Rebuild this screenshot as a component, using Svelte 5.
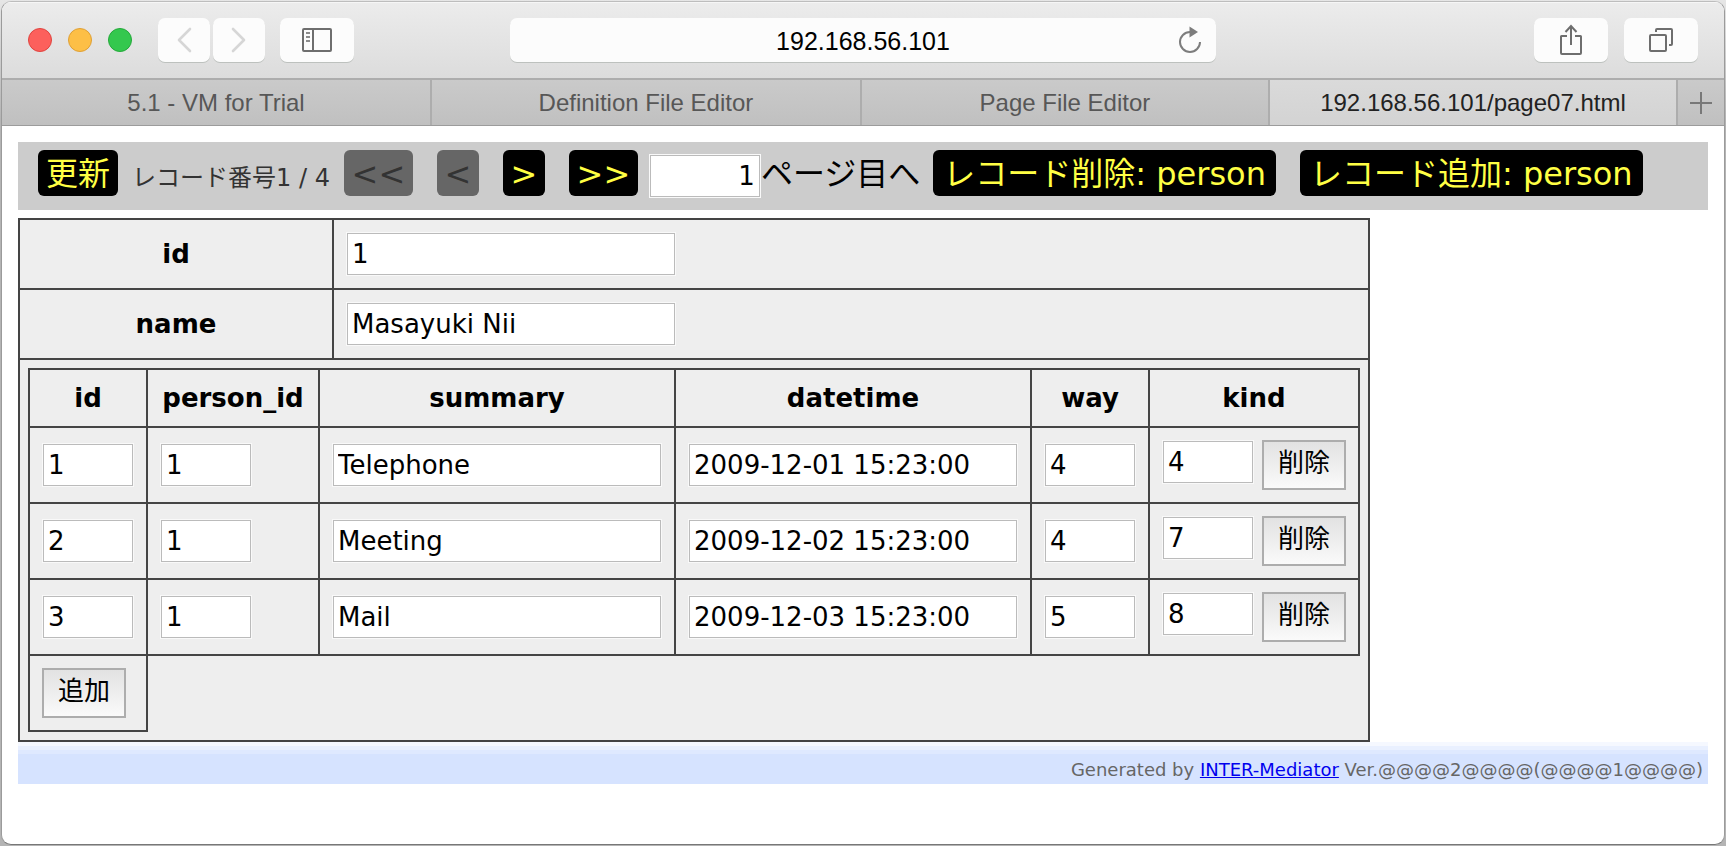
<script>
  const tabs = [
    { title: '5.1 - VM for Trial', weight: 430, active: false },
    { title: 'Definition File Editor', weight: 430, active: false },
    { title: 'Page File Editor', weight: 408, active: false },
    { title: '192.168.56.101/page07.html', weight: 408, active: true },
  ];
  let person = $state({ id: '1', name: 'Masayuki Nii' });
  let page = $state('1');
  const columns = [
    { key: 'id', size: 'short' },
    { key: 'person_id', size: 'short' },
    { key: 'summary', size: 'long' },
    { key: 'datetime', size: 'long' },
    { key: 'way', size: 'short' },
  ];
  let contacts = $state([
    { id: '1', person_id: '1', summary: 'Telephone', datetime: '2009-12-01 15:23:00', way: '4', kind: '4' },
    { id: '2', person_id: '1', summary: 'Meeting', datetime: '2009-12-02 15:23:00', way: '4', kind: '7' },
    { id: '3', person_id: '1', summary: 'Mail', datetime: '2009-12-03 15:23:00', way: '5', kind: '8' },
  ]);
</script>

<div class="window">
  <header class="toolbar">
    <div class="lights">
      <button class="light red" aria-label="Close"></button>
      <button class="light amber" aria-label="Minimize"></button>
      <button class="light green" aria-label="Zoom"></button>
    </div>
    <div class="history">
      <button class="tool" aria-label="Back">
        <svg width="16" height="28" viewBox="0 0 16 28"><path d="M14 3 3 14l11 11" fill="none" stroke="#d6d6d6" stroke-width="2.6" stroke-linecap="round" stroke-linejoin="round" /></svg>
      </button>
      <button class="tool" aria-label="Forward">
        <svg width="16" height="28" viewBox="0 0 16 28"><path d="M2 3l11 11L2 25" fill="none" stroke="#d6d6d6" stroke-width="2.6" stroke-linecap="round" stroke-linejoin="round" /></svg>
      </button>
    </div>
    <button class="tool wide" aria-label="Sidebar">
      <svg width="30" height="24" viewBox="0 0 30 24" fill="none" stroke="#6e6e6e" stroke-width="2">
        <rect x="1" y="1" width="28" height="22" rx="1" />
        <path d="M11 1v22" />
        <path d="M4 5h4M4 9h4M4 13h4" stroke="#8c8c8c" />
      </svg>
    </button>
    <div class="gap-left"></div>
    <div class="address">
      <input aria-label="Address" value="192.168.56.101" />
      <button class="reload" aria-label="Reload">
        <svg width="24" height="28" viewBox="0 0 24 28">
          <path d="M12 6a10 10 0 1 0 10 10" fill="none" stroke="#7d7d7d" stroke-width="2" />
          <path d="M11.500 0.500 20 6l-8.500 5.500z" fill="#7d7d7d" />
        </svg>
      </button>
    </div>
    <div class="gap-right"></div>
    <div class="actions">
      <button class="tool wide" aria-label="Share">
        <svg width="24" height="32" viewBox="0 0 24 32" fill="none" stroke="#6e6e6e" stroke-width="2">
          <path d="M8 12H2.500A.5.5 0 0 0 2 12.500V29a1 1 0 0 0 1 1h18a1 1 0 0 0 1-1V12.500a.5.5 0 0 0-.5-.5H16M12 21V2M6.500 8 12 2l5.500 6" />
        </svg>
      </button>
      <button class="tool wide" aria-label="Show all tabs">
        <svg width="26" height="26" viewBox="0 0 26 26" fill="none" stroke="#6e6e6e" stroke-width="2">
          <rect x="2" y="8" width="16" height="16" rx="1" />
          <path d="M8 5V3a1 1 0 0 1 1-1h14a1 1 0 0 1 1 1v14a1 1 0 0 1-1 1h-2" />
        </svg>
      </button>
    </div>
  </header>

  <nav class="tabs" aria-label="Tabs">
    {#each tabs as tab}
      <button class="tab" class:active={tab.active} style="flex-grow: {tab.weight}">{tab.title}</button>
    {/each}
    <button class="new-tab" aria-label="New tab">
      <svg width="22" height="22" viewBox="0 0 22 22"><path d="M0 11h22M11 0v22" stroke="#787878" stroke-width="2" /></svg>
    </button>
  </nav>

  <main class="page">
    <div class="navigator">
      <button class="nav-btn">更新</button>
      <span class="info">レコード番号1 / 4</span>
      <div class="group">
        <button class="nav-btn double" disabled>&lt;&lt;</button>
        <button class="nav-btn single" disabled>&lt;</button>
        <button class="nav-btn single">&gt;</button>
        <button class="nav-btn double">&gt;&gt;</button>
      </div>
      <label class="jump"><input class="field" bind:value={page} />ページ目へ</label>
      <div class="group">
        <button class="nav-btn command">レコード削除: person</button>
        <button class="nav-btn command">レコード追加: person</button>
      </div>
    </div>

    <table class="record">
      <tbody>
        <tr>
          <th class="name-cell" scope="row"><label for="person-id">id</label></th>
          <td><input id="person-id" class="field long" bind:value={person.id} /></td>
        </tr>
        <tr>
          <th class="name-cell" scope="row"><label for="person-name">name</label></th>
          <td><input id="person-name" class="field long" bind:value={person.name} /></td>
        </tr>
        <tr>
          <td class="nest" colspan="2">
            <table>
              <thead>
                <tr>
                  {#each columns as column}
                    <th class:key-cell={column.key === 'person_id'} scope="col">{column.key}</th>
                  {/each}
                  <th scope="col">kind</th>
                </tr>
              </thead>
              <tbody>
                {#each contacts as contact}
                  <tr>
                    {#each columns as column}
                      <td><input class="field {column.size}" aria-label={column.key} bind:value={contact[column.key]} /></td>
                    {/each}
                    <td>
                      <div class="kind">
                        <input class="field short" aria-label="kind" bind:value={contact.kind} />
                        <button class="row-btn">削除</button>
                      </div>
                    </td>
                  </tr>
                {/each}
                <tr>
                  <td><button class="row-btn">追加</button></td>
                </tr>
              </tbody>
            </table>
          </td>
        </tr>
      </tbody>
    </table>

    <footer class="credit">
      Generated by <a href="#top">INTER-Mediator</a> Ver.@@@@2@@@@(@@@@1@@@@)
    </footer>
  </main>
</div>

<style>
  :global(body) {
    padding: 1px;
    background: linear-gradient(#e6e6e6, #b4b4b4 120px, #b4b4b4);
  }
  .window, .window * {
    box-sizing: border-box;
  }
  .window {
    display: flex;
    flex-direction: column;
    min-height: calc(100vh - 2px);
    border: 1px solid #9b9b9b;
    border-top-color: #bdbdbd;
    border-bottom-color: #777;
    border-radius: 10px;
    overflow: hidden;
    background: #fff;
    color: #000;
    font-family: "DejaVu Sans", "Noto Sans CJK JP", sans-serif;
    font-size: 26px;
  }
  button {
    margin: 0;
    padding: 0;
    border: 0;
    font: inherit;
    color: inherit;
  }
  svg {
    display: block;
  }

  .toolbar {
    display: flex;
    align-items: center;
    height: 76px;
    padding: 0 26px;
    background: linear-gradient(#ececec, #dcdcdc);
    box-shadow: inset 0 1px #f6f6f6;
  }
  .lights {
    display: flex;
    gap: 16px;
  }
  .light {
    width: 24px;
    height: 24px;
    border: 1px solid;
    border-radius: 50%;
  }
  .red { background: #fc605c; border-color: #e0443f; }
  .amber { background: #fdbf46; border-color: #dfa036; }
  .green { background: #34c84e; border-color: #24a93a; }
  .history {
    display: flex;
    gap: 3px;
    margin: 0 15px 0 26px;
  }
  .tool {
    display: flex;
    align-items: center;
    justify-content: center;
    width: 52px;
    height: 44px;
    border-radius: 7px;
    background: #fcfcfc;
    box-shadow: 0 1px #bdc1be;
  }
  .wide {
    width: 74px;
  }
  .gap-left {
    flex: 156 1 0;
  }
  .gap-right {
    flex: 318 1 0;
  }
  .address {
    flex: 0 1 706px;
    display: flex;
    align-items: center;
    height: 44px;
    padding: 0 14px 0 38px;
    border-radius: 7px;
    background: #fcfcfc;
    box-shadow: 0 1px #bdc1be;
  }
  .address input {
    flex: 1;
    min-width: 0;
    padding: 2px 0 0;
    border: 0;
    background: none;
    text-align: center;
    color: #000;
    font: 25px "Liberation Sans", Arial, sans-serif;
  }
  .reload {
    background: none;
  }
  .actions {
    display: flex;
    gap: 16px;
  }

  .tabs {
    display: flex;
    height: 48px;
    border-top: 2px solid #adadad;
    border-bottom: 1px solid #9c9c9c;
    background: linear-gradient(#cacaca, #c0c0c0);
    font-family: "Liberation Sans", Arial, sans-serif;
    font-size: 24px;
    color: #575757;
  }
  .tab {
    flex: 1 1 0;
    min-width: 0;
    border-right: 2px solid #adadad;
    background: none;
  }
  .active {
    background: linear-gradient(#dadada, #d3d3d3);
    color: #222;
  }
  .new-tab {
    display: flex;
    flex: 0 0 46px;
    align-items: center;
    justify-content: center;
    background: none;
  }

  .page {
    padding: 16px;
  }
  .navigator {
    display: flex;
    align-items: flex-start;
    height: 68px;
    margin-bottom: 8px;
    padding: 8px 20px;
    background: #ccc;
    font-size: 32px;
    white-space: nowrap;
  }
  .nav-btn {
    height: 46px;
    padding: 0 8px;
    border-radius: 6px;
    background: #000;
    color: #ff4;
    line-height: 48px;
  }
  .nav-btn:disabled {
    background: #666;
    color: #333;
  }
  .single {
    width: 42px;
    padding: 0;
  }
  .double {
    width: 69px;
    padding: 0;
  }
  .command {
    padding: 0 10px;
  }
  .info {
    margin: 0 14px;
    color: #333;
    font-size: 24px;
    line-height: 56px;
  }
  .group {
    display: flex;
    gap: 24px;
  }
  .jump {
    display: flex;
    margin: 0 13px 0 11px;
    line-height: 48px;
  }
  .jump .field {
    width: 110px;
    margin-top: 5px;
    text-align: right;
  }

  .field {
    display: block;
    height: 42px;
    margin: 1px;
    padding: 0 4px;
    border: 1px solid #bbb;
    border-radius: 0;
    background: #fff;
    box-shadow: 0 0 0 1px #f9f9f9;
    color: #000;
    font: 26px "DejaVu Sans", sans-serif;
  }
  .short { width: 90px; }
  .long { width: 328px; }

  table {
    border-collapse: collapse;
    background: #eee;
  }
  th, td {
    padding: 12px;
    border: 2px solid #444;
    line-height: 32px;
  }
  .name-cell {
    width: 314px;
  }
  .key-cell {
    width: 172px;
  }
  .nest {
    padding: 8px;
  }
  .kind {
    display: flex;
    align-items: flex-start;
    gap: 8px;
  }
  .row-btn {
    display: block;
    width: 84px;
    height: 50px;
    padding-bottom: 4px;
    border: 2px solid #adadad;
    background: linear-gradient(#e2e2e2, #fafafa);
    line-height: 42px;
  }

  .credit {
    height: 42px;
    padding: 12px 5px 0;
    background: linear-gradient(#f5f8ff 4px, #e9f0ff 4px 8px, #dfe9ff 8px 12px, #d6e3ff 12px);
    color: #666;
    font-size: 18px;
    line-height: 32px;
    text-align: right;
  }
  .credit a {
    color: #00e;
  }
</style>
